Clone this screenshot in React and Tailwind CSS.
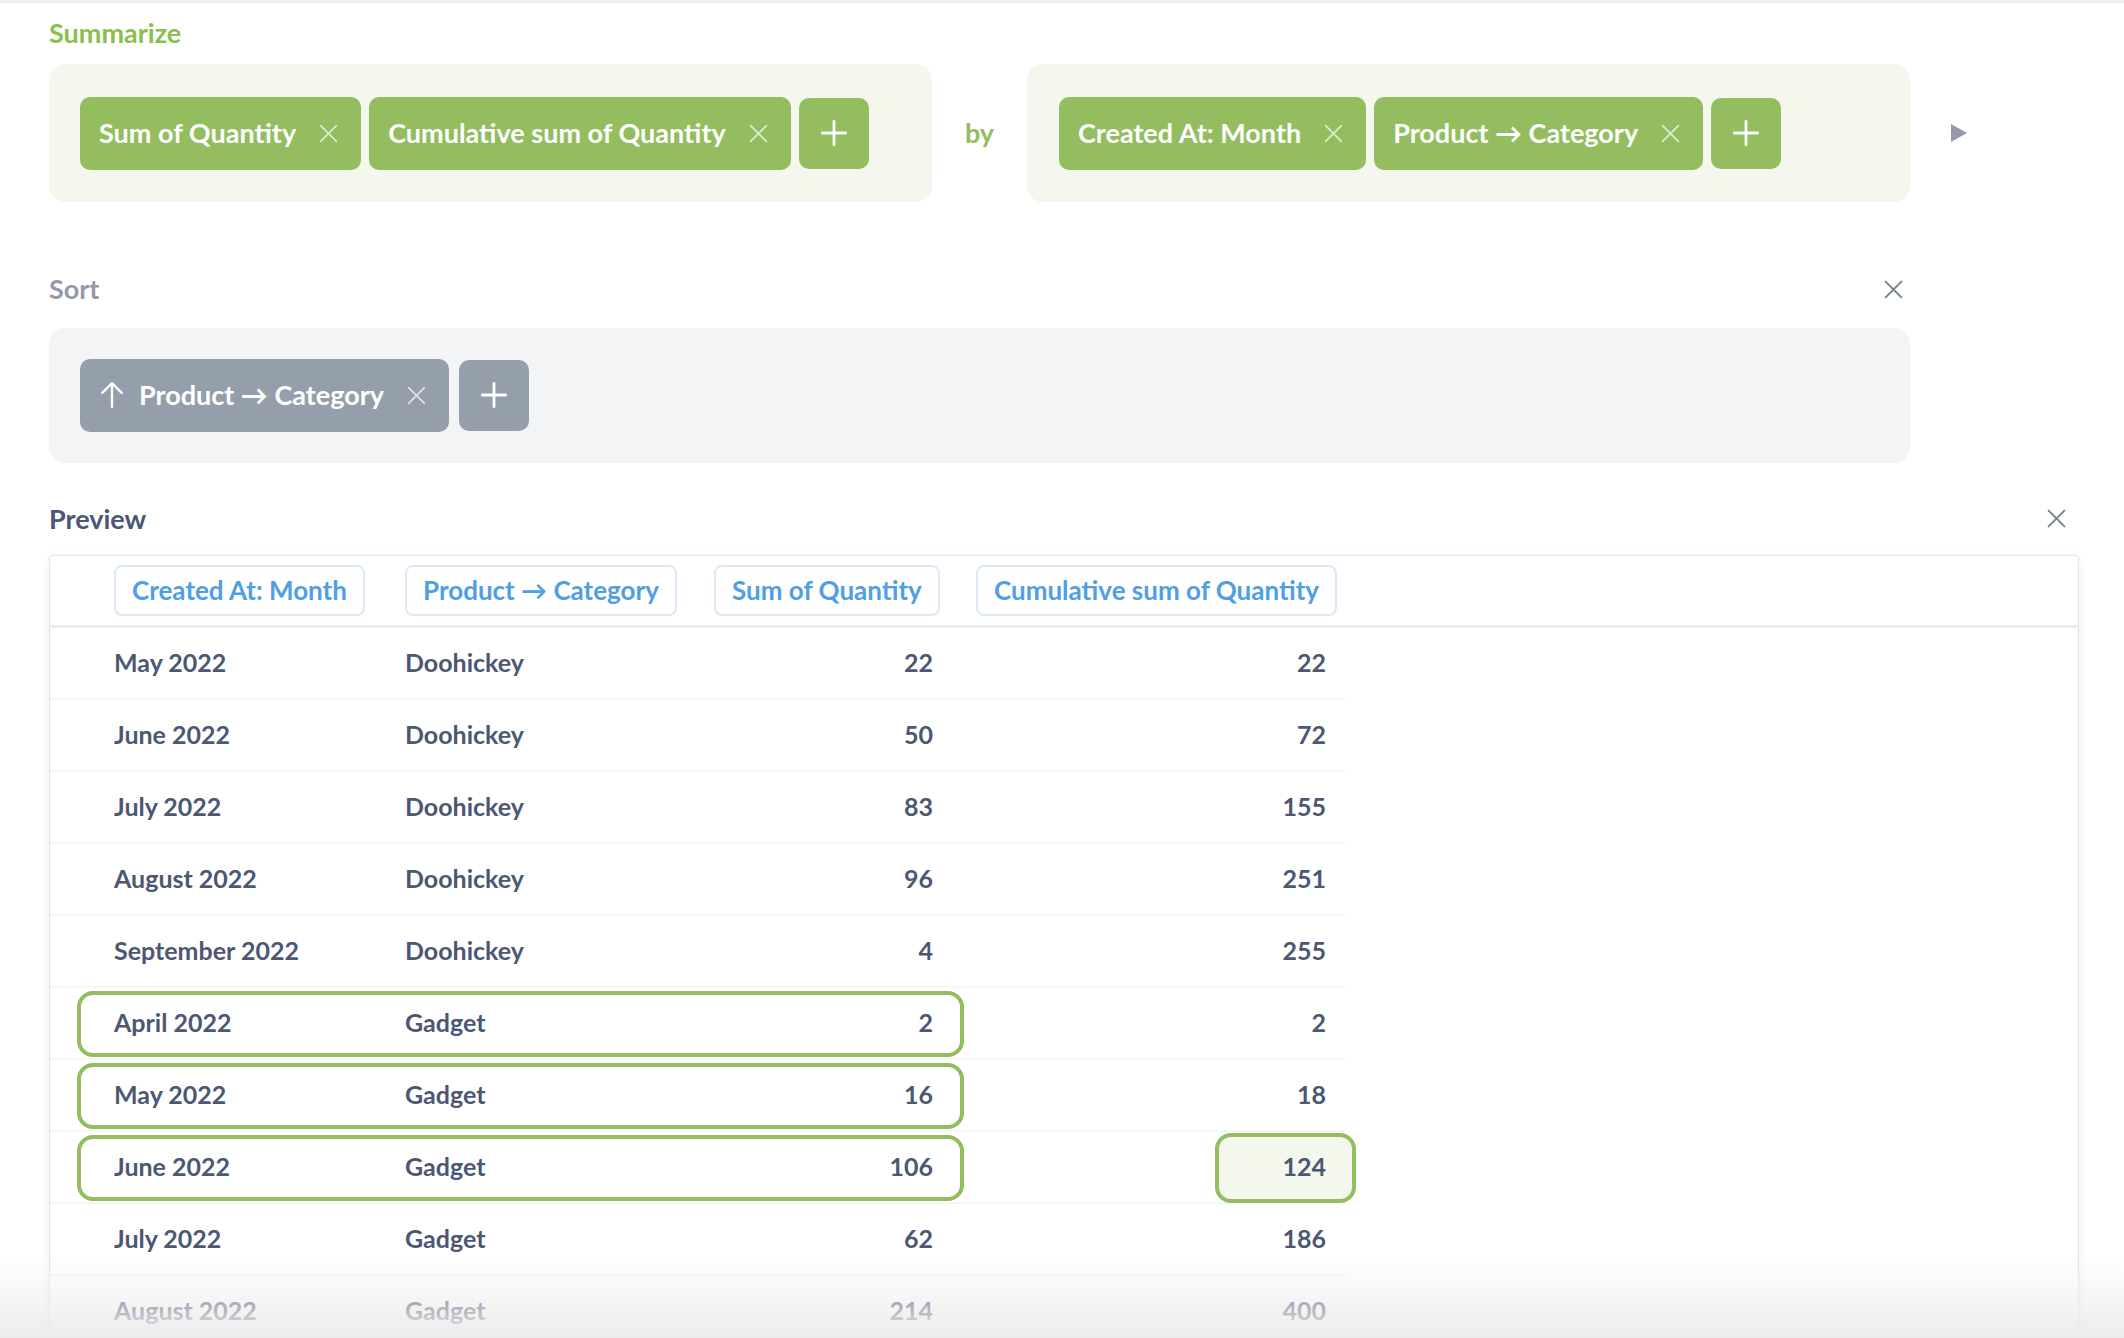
import React from "react";

const X = ({ s = 22, c = "currentColor", w = 2 }) => (
  <svg width={s} height={s} viewBox="0 0 24 24" fill="none" stroke={c} strokeWidth={w} strokeLinecap="round">
    <path d="M3 3L21 21M21 3L3 21" />
  </svg>
);
const Plus = () => (
  <svg width="28" height="28" viewBox="0 0 24 24" fill="none" stroke="white" strokeWidth="2.4" strokeLinecap="round">
    <path d="M12 2V22M2 12H22" />
  </svg>
);

function Pill({ children, green = true, arrow = false }) {
  return (
    <div className={`flex h-[73px] items-center rounded-[10px] pl-[19px] pr-[22px] text-[27px] font-bold text-white ${green ? "bg-[#93bd5f]" : "bg-[#949fab]"}`}>
      {arrow && (
        <svg width="26" height="28" viewBox="0 0 24 26" fill="none" stroke="white" strokeWidth="2.2" strokeLinecap="round" strokeLinejoin="round" className="mr-[14px]">
          <path d="M12 24V2M3 11L12 2L21 11" />
        </svg>
      )}
      <span>{children}</span>
      <span className="ml-[22px] opacity-70"><X s={21} c="white" w={2} /></span>
    </div>
  );
}
function PlusBtn({ green = true }) {
  return (
    <div className={`flex h-[71px] w-[70px] items-center justify-center rounded-[10px] ${green ? "bg-[#93bd5f]" : "bg-[#949fab]"}`}>
      <Plus />
    </div>
  );
}

const rows = [
  ["May 2022", "Doohickey", "22", "22"],
  ["June 2022", "Doohickey", "50", "72"],
  ["July 2022", "Doohickey", "83", "155"],
  ["August 2022", "Doohickey", "96", "251"],
  ["September 2022", "Doohickey", "4", "255"],
  ["April 2022", "Gadget", "2", "2", 1],
  ["May 2022", "Gadget", "16", "18", 1],
  ["June 2022", "Gadget", "106", "124", 2],
  ["July 2022", "Gadget", "62", "186"],
  ["August 2022", "Gadget", "214", "400"],
];

export default function App() {
  return (
    <div className="relative h-[1338px] w-[2124px] overflow-hidden bg-white" style={{ fontFamily: "Lato, 'Open Sans', sans-serif" }}>
      <div className="h-[3px] w-full bg-[#ebedf0]" />
      <div className="pl-[49px]">
        <div className="mt-[14px] text-[27px] font-bold leading-[32px] text-[#88bf4d]">Summarize</div>
        <div className="mt-[15px] flex items-center">
          <div className="flex h-[138px] w-[883px] items-center gap-[8px] rounded-[16px] bg-[#f3f7ee] pl-[31px]">
            <Pill>Sum of Quantity</Pill>
            <Pill>Cumulative sum of Quantity</Pill>
            <PlusBtn />
          </div>
          <div className="w-[95px] text-center text-[27px] font-bold text-[#93bd5f]">by</div>
          <div className="flex h-[138px] w-[883px] items-center gap-[8px] rounded-[16px] bg-[#f3f7ee] pl-[32px]">
            <Pill>Created At: Month</Pill>
            <Pill>Product → Category</Pill>
            <PlusBtn />
          </div>
          <svg width="20" height="22" viewBox="0 0 20 22" className="ml-[39px]"><path d="M2 2L18 11L2 20Z" fill="#949aab" /></svg>
        </div>

        <div className="mt-[67px] flex w-[1861px] items-center justify-between">
          <div className="text-[27px] font-bold text-[#949aab]">Sort</div>
          <span className="mr-[6px] text-[#74838f]"><X s={21} w={2.2} /></span>
        </div>
        <div className="mt-[18px] flex h-[135px] w-[1861px] items-center gap-[10px] rounded-[16px] bg-[#f3f4f6] pl-[31px]">
          <Pill green={false} arrow>Product → Category</Pill>
          <PlusBtn green={false} />
        </div>

        <div className="mt-[36px] flex w-[2024px] items-center justify-between">
          <div className="text-[27px] font-bold text-[#4c5773]">Preview</div>
          <span className="mr-[6px] text-[#74838f]"><X s={21} w={2.2} /></span>
        </div>
        <div className="mt-[16px] w-[2030px] rounded-t-[4px] border border-b-0 border-[#e4e6ea] shadow-[0_2px_8px_rgba(0,0,0,0.08)]">
          <div className="flex h-[72px] items-center border-b-[3px] border-[#ebedf0] text-[26px] font-bold text-[#509ee3]">
            <div className="w-[333px] pl-[64px]"><span className="inline-block rounded-[8px] border-2 border-[#dbe8f7] px-[16px] py-[4px]">Created At: Month</span></div>
            <div className="w-[308px] pl-[22px]"><span className="inline-block rounded-[8px] border-2 border-[#dbe8f7] px-[16px] py-[4px]">Product → Category</span></div>
            <div className="w-[263px] pl-[23px]"><span className="inline-block rounded-[8px] border-2 border-[#dbe8f7] px-[16px] py-[4px]">Sum of Quantity</span></div>
            <div className="w-[392px] pl-[22px]"><span className="inline-block rounded-[8px] border-2 border-[#dbe8f7] px-[16px] py-[4px]">Cumulative sum of Quantity</span></div>
          </div>
          {rows.map((r, i) => (
            <div key={i} className="relative flex h-[72px] w-[1296px] items-center border-b-2 border-[#f5f6f7] text-[25px] font-bold text-[#4c5773]">
              {r[4] && <div className="absolute left-[27px] top-[3px] h-[66px] w-[887px] rounded-[16px] border-[4px] border-[#93bd5f]" />}
              {r[4] === 2 && <div className="absolute left-[1165px] top-[1px] h-[70px] w-[141px] rounded-[16px] border-[4px] border-[#93bd5f] bg-[#f3f7ee]" />}
              <div className="relative w-[333px] pl-[64px]">{r[0]}</div>
              <div className="relative w-[308px] pl-[22px]">{r[1]}</div>
              <div className="relative w-[263px] pr-[21px] text-right">{r[2]}</div>
              <div className="relative w-[392px] pr-[20px] text-right">{r[3]}</div>
            </div>
          ))}
        </div>
      </div>
      <div className="pointer-events-none absolute bottom-0 left-0 h-[80px] w-full bg-gradient-to-b from-transparent to-[#ececec]" />
    </div>
  );
}
